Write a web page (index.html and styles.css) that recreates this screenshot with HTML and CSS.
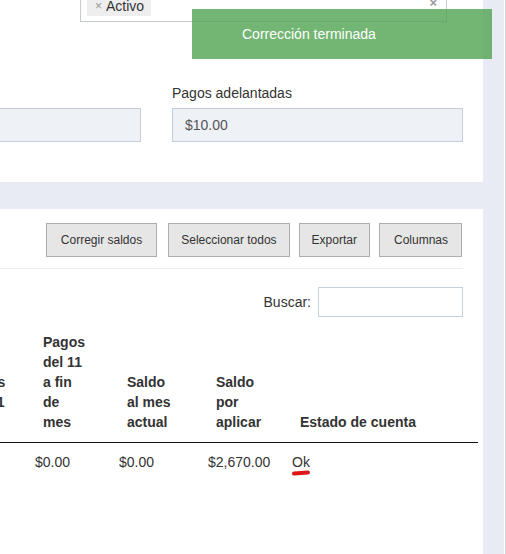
FILE: index.html
```html
<!DOCTYPE html>
<html lang="es">
<head>
    <meta charset="UTF-8">
    <meta name="viewport" content="width=device-width, initial-scale=1.0">
    <title>Estados de cuenta</title>

    <link rel="stylesheet" href="styles.css">
</head>
<body>
    <div class="layout">
        <div class="main">
            <!-- Filtros -->
            <div class="card card-filters">
                <div class="select-row">
                    <div class="select-box">
                        <span class="tag"><span class="tag-x">×</span>Activo</span>
                        <span class="clear">×</span>
                    </div>
                </div>
                <div class="fields">
                    <div class="field field-left">
                        <input type="text" class="input" value="" readonly>
                    </div>
                    <div class="field field-right">
                        <label class="label">Pagos adelantadas</label>
                        <input type="text" class="input" value="$10.00" readonly>
                    </div>
                </div>
            </div>

            <!-- Tabla -->
            <div class="card card-table">
                <div class="toolbar">
                    <button class="btn">Corregir saldos</button>
                    <button class="btn">Seleccionar todos</button>
                    <button class="btn">Exportar</button>
                    <button class="btn">Columnas</button>
                </div>

                <div class="search-row">
                    <label class="search-label" for="buscar">Buscar:</label>
                    <input type="text" id="buscar" class="search-input">
                </div>

                <div class="table-wrap">
                    <table class="table">
                        <colgroup>
                            <col class="col-a">
                            <col class="col-b">
                            <col class="col-c">
                            <col class="col-d">
                            <col class="col-e">
                        </colgroup>
                        <thead>
                            <tr>
                                <th class="th-hidden">Cargos<br>al día 1<br>mes</th>
                                <th>Pagos<br>del 11<br>a fin<br>de<br>mes</th>
                                <th>Saldo<br>al mes<br>actual</th>
                                <th>Saldo<br>por<br>aplicar</th>
                                <th>Estado de cuenta</th>
                            </tr>
                        </thead>
                        <tbody>
                            <tr>
                                <td>$0.00</td>
                                <td>$0.00</td>
                                <td>$0.00</td>
                                <td>$2,670.00</td>
                                <td><span class="ok">Ok</span></td>
                            </tr>
                        </tbody>
                    </table>
                </div>
            </div>
        </div>
        <div class="gutter"></div>
        <div class="edge"></div>
    </div>

    <div class="toast">Corrección terminada</div>
</body>
</html>
```

FILE: styles.css
```css
/* Base */
body {
    font-family: "Liberation Sans", Arial, sans-serif;
    font-size: 14px;
    line-height: 20px;
    color: #333;
    background: #e8ebf3;
    margin: 0;
    overflow: hidden;
    height: 554px;
}

.layout {
    display: flex;
    height: 554px;
}

.main {
    width: 483px;
    display: flex;
    flex-direction: column;
    gap: 27px;
}

.gutter {
    width: 21px;
    background: #e8ebf3;
}

.edge {
    width: 1px;
    background: #fff;
    border-right: 1px solid #d4d4d4;
}

.card {
    background: white;
}

/* Filters card */
.card-filters {
    height: 182px;
    overflow: hidden;
}

.select-row {
    display: flex;
    height: 22px;
}

.select-box {
    margin-left: 80px;
    margin-top: -12px;
    width: 367px;
    height: 34px;
    box-sizing: border-box;
    border: 1px solid #c5cbd8;
    padding: 0 9px 5px 6px;
    display: flex;
    align-items: flex-end;
}

.tag {
    background: #eeeeee;
    height: 20px;
    padding: 0 7px 0 8px;
    display: flex;
    align-items: center;
    color: #333;
}

.tag-x {
    color: #999;
    font-size: 12px;
    margin-right: 4px;
}

.clear {
    margin-left: auto;
    align-self: center;
    color: #999;
    font-weight: bold;
    font-size: 13px;
}

.fields {
    display: flex;
    align-items: flex-end;
    gap: 31px;
    margin-top: 61px;
    margin-left: -59px;
}

.field {
    display: flex;
    flex-direction: column;
}

.field-left {
    width: 200px;
}

.field-right {
    width: 291px;
}

.label {
    display: block;
    margin-bottom: 5px;
}

.input {
    height: 34px;
    box-sizing: border-box;
    border: 1px solid #c5cbd8;
    background: #eef1f6;
    padding: 0 12px;
    font-family: inherit;
    font-size: 14px;
    color: #555;
    outline: none;
}

/* Table card */
.card-table {
    flex: 1;
    padding-right: 20px;
    overflow: hidden;
}

.toolbar {
    display: flex;
    justify-content: flex-end;
    gap: 9px;
    padding: 14px 1px 11px 0;
    border-bottom: 1px solid #eee;
}

.btn {
    height: 34px;
    padding: 0 12px;
    background: #e6e6e6;
    border: 1px solid #adadad;
    border-radius: 0;
    font-family: inherit;
    font-size: 12px;
    color: #333;
}

.btn:first-child {
    margin-right: 2px;
    padding: 0 14px;
}

.btn:last-child {
    padding: 0 13px 0 14px;
}

.search-row {
    display: flex;
    justify-content: flex-end;
    align-items: center;
    gap: 7px;
    margin-top: 18px;
}

.search-input {
    width: 145px;
    height: 30px;
    box-sizing: border-box;
    border: 1px solid #c5d0e0;
    outline: none;
}

.table-wrap {
    margin-top: 5px;
    margin-right: -15px;
    overflow: hidden;
}

.table {
    table-layout: fixed;
    width: 535px;
    margin-left: -57px;
    border-collapse: collapse;
}

.col-a { width: 82px; }
.col-b { width: 84px; }
.col-c { width: 89px; }
.col-d { width: 84px; }
.col-e { width: 196px; }

.table th {
    text-align: left;
    vertical-align: bottom;
    font-weight: bold;
    padding: 10px 4px 10px 18px;
    border-bottom: 1px solid #111;
    white-space: nowrap;
}

.table th.th-hidden {
    padding-left: 14px;
}

.table td {
    padding: 9px 4px 9px 10px;
    white-space: nowrap;
}

.ok {
    position: relative;
}

.ok::after {
    content: "";
    position: absolute;
    left: 0;
    bottom: -5px;
    width: 18px;
    height: 4px;
    background: #e01515;
    border-radius: 3px;
    transform: rotate(-4deg);
}

/* Toast */
.toast {
    position: absolute;
    top: 9px;
    left: 192px;
    width: 300px;
    box-sizing: border-box;
    padding: 15px 15px 15px 50px;
    background: #51a351;
    opacity: 0.8;
    color: white;
    font-size: 14px;
}
```
